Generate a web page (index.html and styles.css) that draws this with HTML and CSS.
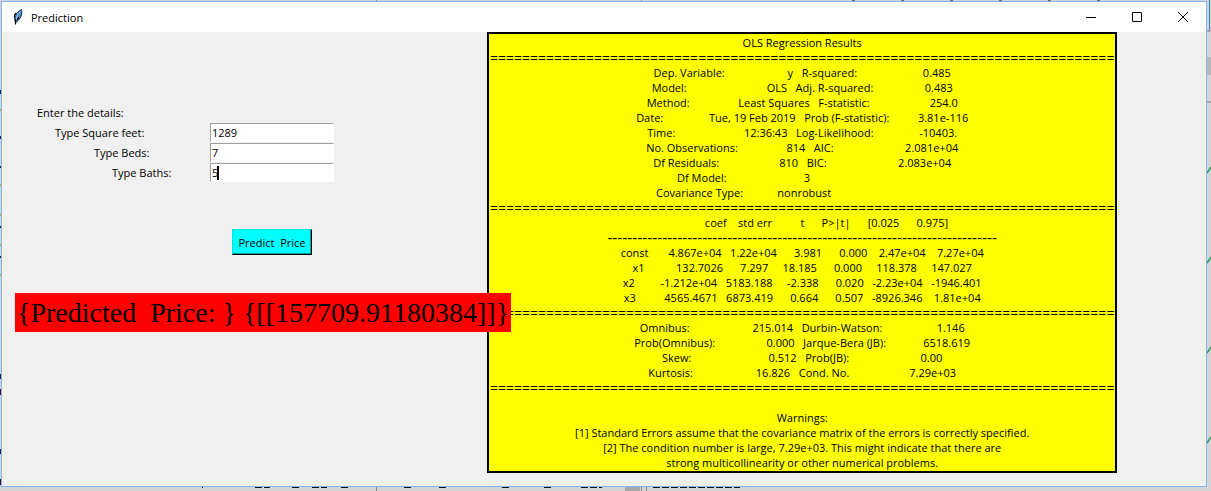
FILE: index.html
```html
<!DOCTYPE html>
<html lang="en">
<head>
<meta charset="utf-8">
<title>Prediction</title>
<link rel="stylesheet" href="styles.css">
</head>
<body>
<!-- Edges of the editor window that show round the dialog -->
<svg class="backdrop" viewBox="0 0 1211 491" preserveAspectRatio="none" aria-hidden="true">
  <path d="M1209.500 0V30" stroke="#2f86c0"/>
  <path d="M1207 31H1211M1207 102H1211" stroke="#777" stroke-width="1"/>
  <path d="M1207 57H1211V75H1207Z" fill="#b8b8b8"/>
  <path d="M1207 173L1211 167M1207 263L1211 257M1207 353L1211 347M1207 443L1211 437" stroke="#2b9a55" stroke-width="1.500"/>
  <path d="M0 90V94M0 136V139M0 166V168M0 226V228M0 256V258M0 374V379M0 449V454" stroke="#222" stroke-width="2"/>
  <path d="M0 109V111M0 184V186M0 214V216M0 244V246M0 274V276" stroke="#d99a3a" stroke-width="2"/>
  <path d="M0 389V395M0 479V485" stroke="#5a0020" stroke-width="2"/>
  <path d="M202 487.500H203M255 487.500H270M292 487.500H299M312 487.500H327M341 487.500H348M404 487.500H411M439 487.500H446M502 487.500H509M544 487.500H551M581 487.500H602M653 487.500H740" stroke="#111" stroke-dasharray="7 2"/>
  <path d="M376.500 487V491M641.500 487V491M646.500 487V491M376.500 0V1M641.500 0V1" stroke="#888"/>
  <path d="M625 487H640V491H625Z" fill="#a8a8a8"/>
  <path d="M852 .5H1100" stroke="#666" stroke-dasharray="3 46"/>
</svg>
<main class="window">
  <header class="titlebar">
    <svg class="feather" viewBox="0 0 16 16" aria-hidden="true">
      <path d="M5.500 13 C3.500 9 5 4 11.500 .5 C12.500 4 11 10 6.500 13Z" fill="#4d86c8" stroke="#1c2b40" stroke-width="1"/>
      <path d="M6 11 C6.500 8 8 5 10.500 2.500" fill="none" stroke="#a9cdf2" stroke-width="1"/>
      <path d="M5.500 15.500 V10 M7 11 L9 8 M4.500 9 V6 L6 4" fill="none" stroke="#000" stroke-width="1.200"/>
    </svg>
    <h1 class="title">Prediction</h1>
    <div class="controls">
      <button class="control" type="button" aria-label="Minimize"><svg viewBox="0 0 10 10"><path d="M0 5.500H10"/></svg></button>
      <button class="control" type="button" aria-label="Maximize"><svg viewBox="0 0 10 10"><path d="M.5 .5H9.500V9.500H.5Z"/></svg></button>
      <button class="control" type="button" aria-label="Close"><svg viewBox="0 0 10 10"><path d="M0 0L10 10M10 0L0 10"/></svg></button>
    </div>
  </header>
  <div class="content">
    <form class="form">
      <p class="intro">Enter the details:</p>
      <div class="field"><label class="label" for="feet">Type Square feet:</label><input class="entry" id="feet" value="1289"></div>
      <div class="field"><label class="label label-beds" for="beds">Type Beds:</label><input class="entry" id="beds" value="7"></div>
      <div class="field"><label class="label label-baths" for="baths">Type Baths:</label><span class="focused"><input class="entry" id="baths" value="5"><span class="caret"></span></span></div>
      <button class="predict" type="button">Predict&nbsp; Price</button>
      <output class="result">{Predicted  Price: } {[[157709.91180384]]}</output>
    </form>
    <section class="summary" aria-label="OLS Regression Results">
      <pre class="lines">OLS Regression Results</pre>
      <pre class="rule">==============================================================================</pre>
      <pre class="lines">Dep. Variable:                      y   R-squared:                       0.485
Model:                            OLS   Adj. R-squared:                  0.483
Method:                 Least Squares   F-statistic:                     254.0
Date:                Tue, 19 Feb 2019   Prob (F-statistic):          3.81e-116
Time:                        12:36:43   Log-Likelihood:                -10403.
No. Observations:                 814   AIC:                         2.081e+04
Df Residuals:                     810   BIC:                         2.083e+04
Df Model:                           3                                         
Covariance Type:            nonrobust                                         </pre>
      <pre class="rule">==============================================================================</pre>
      <pre class="lines">                 coef    std err          t      P&gt;|t|      [0.025      0.975]</pre>
      <pre class="rule rule-dash">------------------------------------------------------------------------------</pre>
      <pre class="lines">const       4.867e+04   1.22e+04      3.981      0.000    2.47e+04    7.27e+04
x1           132.7026      7.297     18.185      0.000     118.378     147.027
x2         -1.212e+04   5183.188     -2.338      0.020   -2.23e+04   -1946.401
x3          4565.4671   6873.419      0.664      0.507   -8926.346    1.81e+04</pre>
      <pre class="rule">==============================================================================</pre>
      <pre class="lines">Omnibus:                      215.014   Durbin-Watson:                   1.146
Prob(Omnibus):                  0.000   Jarque-Bera (JB):             6518.619
Skew:                           0.512   Prob(JB):                         0.00
Kurtosis:                      16.826   Cond. No.                     7.29e+03</pre>
      <pre class="rule">==============================================================================</pre>
      <pre class="lines warnings">Warnings:
[1] Standard Errors assume that the covariance matrix of the errors is correctly specified.
[2] The condition number is large, 7.29e+03. This might indicate that there are
strong multicollinearity or other numerical problems.</pre>
    </section>
  </div>
</main>
</body>
</html>
```
FILE: styles.css
```css
* { box-sizing: border-box; }
body {
  position: relative;
  margin: 0;
  min-height: 100vh;
  display: flex;
  padding: 1px 4px 4px 1px;
  background: #d4d4d4;
  color: #000;
  font: 11px/15px "Open Sans", "Noto Sans", sans-serif;
}
.backdrop { position: absolute; inset: 0; width: 100%; height: 100%; }
.window {
  position: relative;
  flex: 1;
  display: flex;
  flex-direction: column;
  border: 1px solid #7eb8f2;
  background: #f0f0f0;
}
.titlebar {
  display: flex;
  align-items: center;
  height: 30px;
  padding-left: 8px;
  background: #fff;
}
.feather { width: 16px; height: 16px; }
.title { margin: 0 0 0 5px; font-size: 11px; font-weight: 400; }
.controls { display: flex; margin-left: auto; height: 100%; }
.control {
  display: grid;
  place-items: center;
  width: 46px;
  padding: 0;
  border: 0;
  background: none;
}
.control svg { width: 10px; height: 10px; fill: none; stroke: #000; }
.content { flex: 1; display: flex; align-items: flex-start; }
.form { flex: 0 0 485px; min-width: 0; width: 485px; padding-top: 71px; }
.intro { margin: 0 0 0 35px; height: 19px; line-height: 20px; }
.field { display: flex; height: 20px; align-items: center; }
.label { width: 155px; margin-left: 53px; }
.label-beds { width: 116px; margin-left: 92px; }
.label-baths { width: 98px; margin-left: 110px; }
.entry {
  width: 124px;
  height: 19px;
  padding: 0 1px;
  border: 1px solid #fff;
  border-top-color: #a0a0a0;
  border-left-color: #a0a0a0;
  background: #fff;
  font: inherit;
}
.focused { position: relative; display: flex; }
.caret { position: absolute; left: 7px; top: 3px; width: 2px; height: 14px; background: #000; }
.predict {
  display: block;
  margin: 47px 0 0 230px;
  width: 80px;
  height: 26px;
  padding: 0;
  border: 1px solid #000;
  border-top-color: #00e3e3;
  border-left-color: #00e3e3;
  box-shadow: inset -1px -1px #00a0a0;
  background: #0ff;
  font: inherit;
}
.result {
  display: block;
  position: relative;
  z-index: 1;
  width: max-content;
  margin: 38px 0 0 13px;
  padding: 0 2px;
  background: #f00;
  font: 28px/39px "Liberation Serif", serif;
  white-space: pre;
}
.summary {
  flex: none;
  min-width: 630px;
  border: 2px solid #000;
  padding: 1px;
  background: #ff0;
  text-align: center;
}
.lines, .rule { margin: 0; font: inherit; }
.rule { font-size: 14px; }
.rule-dash { font: 15px/15px "Liberation Sans", sans-serif; }
.warnings { margin-top: 15px; }
```
